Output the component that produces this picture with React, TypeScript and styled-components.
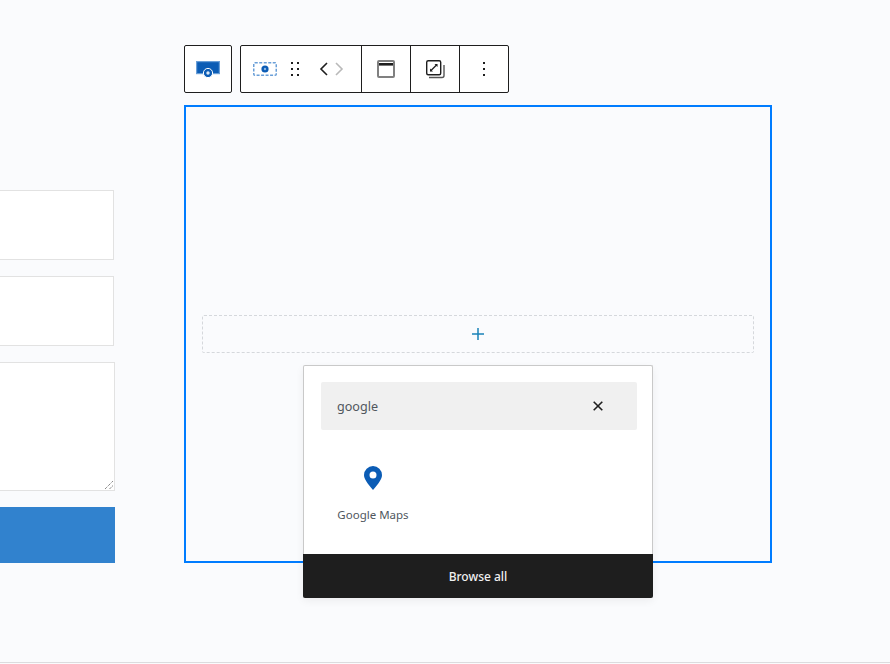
import styled, { createGlobalStyle } from 'styled-components';

const GlobalStyle = createGlobalStyle`
  html, body {
    margin: 0;
    padding: 0;
    background: #fafbfd;
    overflow: hidden;
  }
  * {
    box-sizing: border-box;
  }
`;

const Page = styled.div`
  display: flex;
  align-items: flex-start;
  width: 890px;
  height: 663px;
  border-bottom: 1px solid #dcdcde;
  font-family: 'Noto Sans', 'Open Sans', sans-serif;
  overflow: hidden;
`;

const FormColumn = styled.div`
  display: flex;
  flex-direction: column;
  width: 115px;
  margin-top: 190px;
  margin-right: 69px;
`;

const Field = styled.div<{ $height: number; $width: number; $gap?: number }>`
  position: relative;
  width: ${(props) => props.$width}px;
  height: ${(props) => props.$height}px;
  margin-bottom: ${(props) => props.$gap ?? 16}px;
  background: #fff;
  border: 1px solid #e2e2e2;
  border-left: none;
`;

const ResizeHandle = styled.svg`
  position: absolute;
  right: 0;
  bottom: 0;
`;

const SubmitBar = styled.div`
  height: 56px;
  background: #3182ce;
`;

const EditorColumn = styled.div`
  display: flex;
  flex-direction: column;
  width: 588px;
  padding-top: 45px;
`;

const Toolbar = styled.div`
  display: flex;
  gap: 8px;
  margin-bottom: 12px;
`;

const ToolGroup = styled.div`
  display: flex;
  height: 48px;
  background: #fff;
  border: 1px solid #1e1e1e;
  border-radius: 2px;
`;

const ToolCell = styled.div<{ $width: number; $divider?: boolean }>`
  display: flex;
  align-items: center;
  justify-content: center;
  width: ${(props) => props.$width}px;
  border-left: ${(props) => (props.$divider ? '1px solid #1e1e1e' : 'none')};
`;

const MoverCell = styled(ToolCell)`
  justify-content: flex-start;
  padding-left: 12px;
`;

const Block = styled.div`
  position: relative;
  display: flex;
  flex-direction: column;
  height: 458px;
  padding: 208px 16px 0;
  border: 2px solid #007cff;
`;

const Appender = styled.div`
  display: flex;
  align-items: center;
  justify-content: center;
  height: 38px;
  border: 1px dashed #d5d8dc;
  border-radius: 2px;
`;

const Popover = styled.div`
  position: absolute;
  left: 117px;
  top: 258px;
  display: flex;
  flex-direction: column;
  width: 350px;
  height: 233px;
  background: #fff;
  border: 1px solid #c9c9c9;
  border-bottom: none;
  border-radius: 2px;
  box-shadow: 0 3px 8px rgba(0, 0, 0, 0.06);
`;

const SearchBox = styled.div`
  display: flex;
  align-items: center;
  justify-content: space-between;
  height: 48px;
  margin: 16px 15px 0 17px;
  padding: 0 34px 0 16px;
  background: #f0f0f0;
  border-radius: 2px;
  font-size: 12.6px;
  color: #50575e;
`;

const Results = styled.div`
  flex: 1;
  padding: 36px 0 0 17px;
`;

const ResultItem = styled.div`
  display: flex;
  flex-direction: column;
  align-items: center;
  width: 104px;
  font-size: 11.5px;
  line-height: 16px;
  color: #50575e;
`;

const ResultIcon = styled.svg`
  margin-bottom: 17px;
`;

const BrowseAll = styled.div`
  display: flex;
  align-items: center;
  justify-content: center;
  height: 44px;
  margin: 0 -1px;
  background: #1e1e1e;
  border-radius: 0 0 2px 2px;
  color: #f0f0f0;
  font-size: 12px;
  font-weight: 500;
`;

function App() {
  return (
    <>
      <GlobalStyle />
      <Page>
        <FormColumn>
          <Field $width={114} $height={70} />
          <Field $width={114} $height={70} />
          <Field $width={115} $height={129}>
            <ResizeHandle width="10" height="10" viewBox="0 0 10 10">
              <path d="M1 9 9 1M5.500 9 9 5.500" stroke="#555" strokeWidth="1" strokeDasharray="1 1" fill="none" />
            </ResizeHandle>
          </Field>
          <SubmitBar />
        </FormColumn>
        <EditorColumn>
          <Toolbar>
            <ToolGroup>
              <ToolCell $width={46}>
                <svg width="24" height="17" viewBox="0 0 24 17">
                  <rect x="0.6" y="0.6" width="22.8" height="12" fill="#0b5cb5" stroke="#6a9fd8" strokeWidth="1.2" />
                  <circle cx="12" cy="12" r="4.600" fill="#0b5cb5" stroke="#fff" strokeWidth="1" />
                  <circle cx="12" cy="12" r="1.700" fill="#dbe8f6" />
                </svg>
              </ToolCell>
            </ToolGroup>
            <ToolGroup>
              <MoverCell $width={120}>
                <svg width="24" height="14" viewBox="0 0 24 14">
                  <rect x="0.75" y="0.75" width="22.5" height="12.5" rx="1" fill="none" stroke="#6a9fd8" strokeWidth="1.5" strokeDasharray="3 1.500" />
                  <circle cx="12" cy="7" r="3.600" fill="#0b5cb5" />
                  <circle cx="12" cy="7" r="1.200" fill="#8db8e6" />
                </svg>
                <svg width="10" height="16" viewBox="0 0 10 16" style={{ marginLeft: 13 }}>
                  <path d="M1 1h2v2H1zM7 1h2v2H7zM1 7h2v2H1zM7 7h2v2H7zM1 13h2v2H1zM7 13h2v2H7z" fill="#1e1e1e" />
                </svg>
                <svg width="10" height="14" viewBox="0 0 10 14" style={{ marginLeft: 19 }}>
                  <path d="M8 1 2 7l6 6" fill="none" stroke="#1e1e1e" strokeWidth="1.6" />
                </svg>
                <svg width="10" height="14" viewBox="0 0 10 14" style={{ marginLeft: 5 }}>
                  <path d="M2 1l6 6-6 6" fill="none" stroke="#b9b9b9" strokeWidth="1.6" />
                </svg>
              </MoverCell>
              <ToolCell $width={49} $divider>
                <svg width="18" height="18" viewBox="0 0 18 18">
                  <rect x="1" y="1" width="16" height="16" rx="1" fill="#fff" stroke="#808080" strokeWidth="2" />
                  <rect x="2" y="3" width="14" height="2.600" fill="#1e1e1e" />
                </svg>
              </ToolCell>
              <ToolCell $width={49} $divider>
                <svg width="20" height="20" viewBox="0 0 20 20">
                  <rect x="1.700" y="1.700" width="14" height="14" rx="1.500" fill="none" stroke="#1e1e1e" strokeWidth="1.400" />
                  <path d="M5.500 12l6.500-6.500" stroke="#1e1e1e" strokeWidth="1.300" />
                  <path d="M5 12.500v-3l3 3zM12.500 5v3l-3-3z" fill="#1e1e1e" />
                  <path d="M19 6v10.500a2 2 0 0 1-2 2H4" fill="none" stroke="#555" strokeWidth="1.400" />
                </svg>
              </ToolCell>
              <ToolCell $width={49} $divider>
                <svg width="4" height="16" viewBox="0 0 4 16">
                  <path d="M1 1h2v2H1zM1 7h2v2H1zM1 13h2v2H1z" fill="#1e1e1e" />
                </svg>
              </ToolCell>
            </ToolGroup>
          </Toolbar>
          <Block>
            <Appender>
              <svg width="14" height="14" viewBox="0 0 14 14">
                <path d="M7 1v12M1 7h12" stroke="#1a83b8" strokeWidth="1.500" fill="none" />
              </svg>
            </Appender>
            <Popover>
              <SearchBox>
                google
                <svg width="10" height="10" viewBox="0 0 10 10">
                  <path d="M0.700 0.700l8.600 8.600M9.300 0.700 0.700 9.300" stroke="#1e1e1e" strokeWidth="1.600" fill="none" />
                </svg>
              </SearchBox>
              <Results>
                <ResultItem>
                  <ResultIcon width="18" height="24" viewBox="0 0 18 24">
                    <path
                      fillRule="evenodd"
                      d="M9 0a9 9 0 0 1 9 9c0 3.600-3 8-9 15C3 17 0 12.600 0 9a9 9 0 0 1 9-9zm0 5.500a3.500 3.500 0 1 0 0 7 3.500 3.500 0 0 0 0-7z"
                      fill="#0b5cb5"
                    />
                  </ResultIcon>
                  Google Maps
                </ResultItem>
              </Results>
              <BrowseAll>Browse all</BrowseAll>
            </Popover>
          </Block>
        </EditorColumn>
      </Page>
    </>
  );
}

export default App;
